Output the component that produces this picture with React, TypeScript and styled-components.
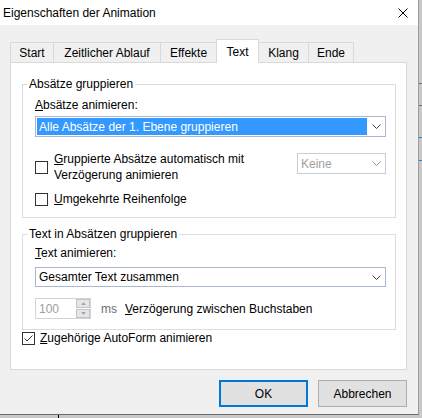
import React from "react";
import styled, { createGlobalStyle } from "styled-components";

const GlobalStyle = createGlobalStyle`
  html, body {
    margin: 0;
    padding: 0;
    background: #c8c8c8;
  }
  body {
    font-family: "Liberation Sans", Arial, sans-serif;
    font-size: 12px;
    color: #000;
  }
`;

const Screen = styled.div`
  width: 422px;
  height: 418px;
  overflow: hidden;
  background:
    linear-gradient(#6e6e6e, #6e6e6e) 419px 83px / 3px 1px no-repeat,
    linear-gradient(#6e6e6e, #6e6e6e) 419px 105px / 3px 1px no-repeat,
    linear-gradient(#2a7fd4, #2a7fd4) 419px 137px / 3px 1px no-repeat,
    linear-gradient(#2a7fd4, #2a7fd4) 419px 160px / 3px 1px no-repeat,
    linear-gradient(#000, #000) 58px 415px / 1px 3px no-repeat,
    #c8c8c8;
`;

const Window = styled.div`
  box-sizing: border-box;
  width: 419px;
  height: 415px;
  background: #f0f0f0;
  border-right: 1px solid #9d9d9d;
  border-bottom: 1px solid #6b6b6b;
  display: flex;
  flex-direction: column;
`;

const TitleBar = styled.div`
  height: 25px;
  flex: none;
  background: #fff;
  display: flex;
  align-items: center;
  justify-content: space-between;
  padding-left: 3px;
`;

const Title = styled.span`
  line-height: 16px;
  margin-top: 0px;
`;

const CloseIcon = styled.svg`
  width: 10px;
  height: 10px;
  margin-right: 10px;
  margin-top: 0px;
`;

const Body = styled.div`
  padding: 14px 0 0 10px;
`;

const TabStrip = styled.div`
  display: flex;
  align-items: flex-end;
  height: 23px;
`;

const Tab = styled.div<{ $w: number; $active?: boolean }>`
  box-sizing: border-box;
  width: ${({ $w }) => $w}px;
  height: ${({ $active }) => ($active ? 24 : 20)}px;
  margin-bottom: ${({ $active }) => ($active ? -1 : 0)}px;
  margin-left: -1px;
  &:first-child {
    margin-left: 0;
  }
  border: 1px solid #d9d9d9;
  border-bottom: none;
  background: ${({ $active }) => ($active ? "#fff" : "#f0f0f0")};
  position: relative;
  z-index: ${({ $active }) => ($active ? 2 : 1)};
  display: flex;
  align-items: center;
  justify-content: center;
  line-height: 16px;
  padding-top: ${({ $active }) => ($active ? 0 : 1)}px;
`;

const Panel = styled.div`
  box-sizing: border-box;
  width: 397px;
  height: 308px;
  background: #fff;
  border: 1px solid #d9d9d9;
  padding: 13px 10px 0 11px;
  display: flex;
  flex-direction: column;
`;

const Group = styled.fieldset<{ $gap?: number }>`
  margin: ${({ $gap }) => $gap ?? 0}px 0 0 0;
  padding: 0;
  min-width: 0;
  border: 1px solid #dcdcdc;
`;

const Legend = styled.legend`
  margin-left: 4px;
  padding: 0 2px;
  line-height: 16px;
`;

const GroupContent = styled.div<{ $top: number; $bottom: number }>`
  padding: ${({ $top }) => $top}px 9px ${({ $bottom }) => $bottom}px 12px;
  display: flex;
  flex-direction: column;
`;

const FieldLabel = styled.div`
  line-height: 16px;
`;

const Key = styled.span`
  text-decoration: underline;
  text-underline-offset: 1px;
`;

const Combo = styled.div<{ $h: number; $disabled?: boolean; $w?: number; $top?: number }>`
  box-sizing: border-box;
  display: flex;
  height: ${({ $h }) => $h}px;
  width: ${({ $w }) => ($w ? `${$w}px` : "100%")};
  margin-top: ${({ $top }) => $top ?? 0}px;
  flex: none;
  background: #fff;
  border: 1px solid ${({ $disabled }) => ($disabled ? "#c3cedf" : "#a9b8cf")};
  color: ${({ $disabled }) => ($disabled ? "#a0a0a0" : "#000")};
`;

const ComboValue = styled.div<{ $selected?: boolean }>`
  flex: 1;
  margin: 1px 0 1px 1px;
  padding-left: 2px;
  display: flex;
  align-items: center;
  white-space: nowrap;
  background: ${({ $selected }) => ($selected ? "#3399ff" : "transparent")};
  color: ${({ $selected }) => ($selected ? "#fff" : "inherit")};
`;

const ComboArrow = styled.div`
  width: 18px;
  flex: none;
  display: flex;
  align-items: center;
  justify-content: center;
`;

const Chevron = ({ color }: { color: string }) => (
  <svg width="9" height="5" viewBox="0 0 9 5">
    <polyline points="0.5,0.5 4.5,4.5 8.5,0.5" fill="none" stroke={color} strokeWidth="1" />
  </svg>
);

const CheckRow = styled.div<{ $top: number }>`
  display: flex;
  align-items: flex-start;
  justify-content: space-between;
  margin-top: ${({ $top }) => $top}px;
`;

const CheckItem = styled.label<{ $gap: number }>`
  display: flex;
  align-items: center;
  gap: ${({ $gap }) => $gap}px;
`;

const Box = styled.span`
  box-sizing: border-box;
  width: 13px;
  height: 13px;
  flex: none;
  border: 1px solid #333;
  background: #fff;
  display: flex;
  align-items: center;
  justify-content: center;
`;

const CheckText = styled.span`
  line-height: 16px;
`;

const SpinRow = styled.div`
  display: flex;
  align-items: center;
  margin-top: 11px;
`;

const SpinBox = styled.div`
  box-sizing: border-box;
  width: 56px;
  height: 21px;
  display: flex;
  border: 1px solid #cdd5e1;
  background: #fff;
`;

const SpinText = styled.div`
  flex: 1;
  padding-left: 3px;
  display: flex;
  align-items: center;
  color: #a0a0a0;
`;

const SpinButtons = styled.div`
  width: 14px;
  display: flex;
  flex-direction: column;
  gap: 1px;
  padding: 0 0 0 0;
`;

const SpinButton = styled.div`
  box-sizing: border-box;
  flex: 1;
  background: #e6e6e6;
  border: 1px solid #c4c4c4;
  display: flex;
  align-items: center;
  justify-content: center;
`;

const Unit = styled.span`
  color: #6d6d6d;
  margin-left: 10px;
  margin-right: 8px;
  line-height: 16px;
`;

const ButtonRow = styled.div`
  width: 397px;
  display: flex;
  justify-content: flex-end;
  gap: 10px;
  margin-top: 10px;
`;

const DialogButton = styled.button<{ $primary?: boolean }>`
  box-sizing: border-box;
  width: 89px;
  height: 27px;
  padding: 0;
  font: inherit;
  color: #000;
  background: #e1e1e1;
  border: ${({ $primary }) => ($primary ? "2px solid #0078d7" : "1px solid #adadad")};
`;

const tabs = [
  { label: "Start", w: 44 },
  { label: "Zeitlicher Ablauf", w: 108 },
  { label: "Effekte", w: 57 },
  { label: "Text", w: 43, active: true },
  { label: "Klang", w: 51 },
  { label: "Ende", w: 46 },
];

export default function App() {
  return (
    <>
      <GlobalStyle />
      <Screen>
        <Window>
          <TitleBar>
            <Title>Eigenschaften der Animation</Title>
            <CloseIcon viewBox="0 0 10 10">
              <path d="M0.5 0.5 L9.5 9.5 M9.5 0.5 L0.5 9.5" stroke="#000" strokeWidth="1" fill="none" />
            </CloseIcon>
          </TitleBar>
          <Body>
            <TabStrip>
              {tabs.map((t) => (
                <Tab key={t.label} $w={t.w} $active={t.active}>
                  {t.label}
                </Tab>
              ))}
            </TabStrip>
            <Panel>
              <Group>
                <Legend>Absätze gruppieren</Legend>
                <GroupContent $top={5} $bottom={10}>
                  <FieldLabel>
                    <Key>A</Key>bsätze animieren:
                  </FieldLabel>
                  <Combo $h={21} $top={3}>
                    <ComboValue $selected>Alle Absätze der 1. Ebene gruppieren</ComboValue>
                    <ComboArrow>
                      <Chevron color="#444" />
                    </ComboArrow>
                  </Combo>
                  <CheckRow $top={14}>
                    <CheckItem $gap={6}>
                      <Box />
                      <CheckText>
                        <Key>G</Key>ruppierte Absätze automatisch mit
                        <br />
                        Verzögerung animieren
                      </CheckText>
                    </CheckItem>
                    <Combo $h={21} $w={89} $top={2} $disabled>
                      <ComboValue>Keine</ComboValue>
                      <ComboArrow>
                        <Chevron color="#9a9a9a" />
                      </ComboArrow>
                    </Combo>
                  </CheckRow>
                  <CheckRow $top={8}>
                    <CheckItem $gap={6}>
                      <Box />
                      <CheckText>
                        <Key>U</Key>mgekehrte Reihenfolge
                      </CheckText>
                    </CheckItem>
                  </CheckRow>
                </GroupContent>
              </Group>
              <Group $gap={8}>
                <Legend>Text in Absätzen gruppieren</Legend>
                <GroupContent $top={3} $bottom={10}>
                  <FieldLabel>
                    <Key>T</Key>ext animieren:
                  </FieldLabel>
                  <Combo $h={20} $top={6}>
                    <ComboValue>Gesamter Text zusammen</ComboValue>
                    <ComboArrow>
                      <Chevron color="#444" />
                    </ComboArrow>
                  </Combo>
                  <SpinRow>
                    <SpinBox>
                      <SpinText>100</SpinText>
                      <SpinButtons>
                        <SpinButton>
                          <svg width="5" height="3" viewBox="0 0 5 3">
                            <polygon points="0,3 2.5,0 5,3" fill="#a8a8a8" />
                          </svg>
                        </SpinButton>
                        <SpinButton>
                          <svg width="5" height="3" viewBox="0 0 5 3">
                            <polygon points="0,0 5,0 2.5,3" fill="#a8a8a8" />
                          </svg>
                        </SpinButton>
                      </SpinButtons>
                    </SpinBox>
                    <Unit>ms</Unit>
                    <CheckText>
                      <Key>V</Key>erzögerung zwischen Buchstaben
                    </CheckText>
                  </SpinRow>
                </GroupContent>
              </Group>
              <CheckRow $top={0}>
                <CheckItem $gap={5}>
                  <Box>
                    <svg width="11" height="11" viewBox="0 0 11 11">
                      <polyline points="1.5,5.5 4,8 9.5,2.5" fill="none" stroke="#333" strokeWidth="1" />
                    </svg>
                  </Box>
                  <CheckText>
                    <Key>Z</Key>ugehörige AutoForm animieren
                  </CheckText>
                </CheckItem>
              </CheckRow>
            </Panel>
            <ButtonRow>
              <DialogButton $primary>OK</DialogButton>
              <DialogButton>Abbrechen</DialogButton>
            </ButtonRow>
          </Body>
        </Window>
      </Screen>
    </>
  );
}
